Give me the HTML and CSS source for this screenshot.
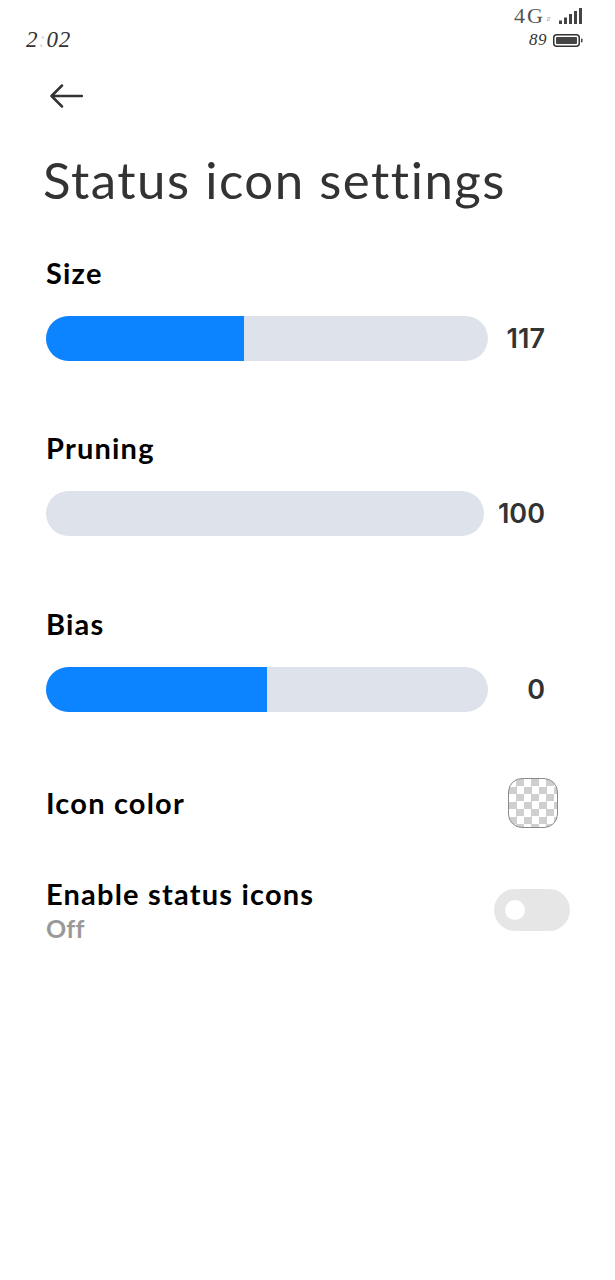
FILE: index.html
```html
<!DOCTYPE html>
<html lang="en">
<head>
<meta charset="utf-8">
<title>Status icon settings</title>
<link rel="stylesheet" href="styles.css">
</head>
<body>
<div class="page">
  <header class="status">
    <div class="time">2<span class="colon">:</span>02</div>
    <div class="sys">
      <div class="sys-row net">
        <span class="net-label">4G</span><span class="net-arrows">⇵</span>
        <svg class="signal" width="24" height="16" viewBox="0 0 24 16"><g fill="#444"><rect x="0" y="12.5" width="3" height="3.5"/><rect x="5" y="9.5" width="3" height="6.5"/><rect x="10" y="6" width="3" height="10"/><rect x="15" y="3" width="3" height="13"/><rect x="20" y="0" width="3" height="16"/></g></svg>
      </div>
      <div class="sys-row batt">
        <span class="batt-num">89</span>
        <svg class="battery" width="30" height="13" viewBox="0 0 30 13"><rect x="0.75" y="0.75" width="25.5" height="11.5" rx="3" fill="none" stroke="#333" stroke-width="1.5"/><rect x="3" y="3" width="21" height="7" rx="1" fill="#444"/><rect x="28" y="4.5" width="1.5" height="4" rx="0.7" fill="#444"/></svg>
      </div>
    </div>
  </header>

  <button class="back" aria-label="Back">
    <svg width="34" height="24" viewBox="0 0 34 24"><path d="M13 1.5 L2.5 12 L13 22.5 M2.5 12 H33" fill="none" stroke="#333" stroke-width="2.5" stroke-linecap="round" stroke-linejoin="round"/></svg>
  </button>

  <h1 class="title">Status icon settings</h1>

  <section class="slider">
    <div class="label">Size</div>
    <div class="slider-row">
      <div class="track"><div class="fill" style="width:44.8%"></div></div>
      <div class="value">117</div>
    </div>
  </section>
  <section class="slider">
    <div class="label">Pruning</div>
    <div class="slider-row">
      <div class="track"></div>
      <div class="value">100</div>
    </div>
  </section>
  <section class="slider">
    <div class="label">Bias</div>
    <div class="slider-row">
      <div class="track"><div class="fill" style="width:50%"></div></div>
      <div class="value">0</div>
    </div>
  </section>

  <div class="row color-row">
    <div class="label">Icon color</div>
    <div class="swatch"></div>
  </div>
  <div class="row enable-row">
    <div class="enable-text">
      <div class="label">Enable status icons</div>
      <div class="sub">Off</div>
    </div>
    <div class="toggle"><div class="knob"></div></div>
  </div>
</div>
</body>
</html>
```
FILE: styles.css
```css
* { box-sizing: border-box; }
html, body { margin: 0; padding: 0; background: #fff; }
body { font-family: Lato, sans-serif; color: #000; }
.page { width: 615px; height: 1280px; overflow: hidden; }

.status { display: flex; justify-content: space-between; align-items: flex-start; height: 84px; padding: 7px 32px 0 26px; }
.time { margin-top: 20px; font: italic 23px/26px "Liberation Serif", serif; color: #333; letter-spacing: 0.7px; }
.colon { color: #ddd; }
.sys { display: flex; flex-direction: column; align-items: flex-end; }
.sys-row { display: flex; align-items: center; }
.net { height: 18px; }
.net-label { font: 22px/18px "Liberation Serif", serif; color: #555; letter-spacing: 2px; }
.net-arrows { font: 6px/8px "Liberation Sans", sans-serif; color: #aaa; margin: 6px 8px 0 1px; }
.batt { height: 16px; margin-top: 7px; }
.batt-num { font: italic 17px/16px "Liberation Serif", serif; color: #333; letter-spacing: 0.5px; margin-right: 6px; }

.back { display: block; margin: 0 0 0 49px; padding: 0; border: 0; background: none; height: 24px; }
.back svg { display: block; }

.title { margin: 38px 0 0 43px; font-size: 51px; line-height: 68px; font-weight: 400; letter-spacing: 1.5px; color: #333; }

.slider { margin: 0 70px 0 46px; height: 175.4px; }
.title + .slider { margin-top: 41px; }
.label { font-size: 29px; line-height: 35px; font-weight: 700; letter-spacing: 1.2px; color: #000; }
.slider-row { display: flex; align-items: center; gap: 14px; margin-top: 25px; }
.track { flex: 1; height: 45px; border-radius: 23px; background: #dee2ea; overflow: hidden; }
.fill { height: 100%; background: #0d84ff; }
.value { min-width: 43px; text-align: right; font-family: Inter, sans-serif; font-size: 27px; line-height: 47px; font-weight: 600; color: #333; }

.row { display: flex; justify-content: space-between; align-items: center; margin-left: 46px; }
.color-row { margin-top: -4.5px; margin-right: 57px; height: 52px; }
.swatch { width: 50px; height: 50px; border-radius: 14px; border: 1px solid #8a8a8a;
  background: repeating-conic-gradient(#cfcfcf 0 25%, #fff 0 50%) 0 0 / 15px 15px; }
.enable-row { margin-top: 47px; margin-right: 45px; align-items: flex-start; }
.enable-text .label { line-height: 36px; }
.sub { font-size: 25px; line-height: 30px; font-weight: 700; letter-spacing: 0.2px; color: #999; margin-top: 1px; }
.toggle { width: 76px; height: 42px; border-radius: 21px; background: #e6e6e6; display: flex; align-items: center; padding-left: 11px; margin-top: 13px; }
.knob { width: 20px; height: 20px; border-radius: 50%; background: #fff; }
```
